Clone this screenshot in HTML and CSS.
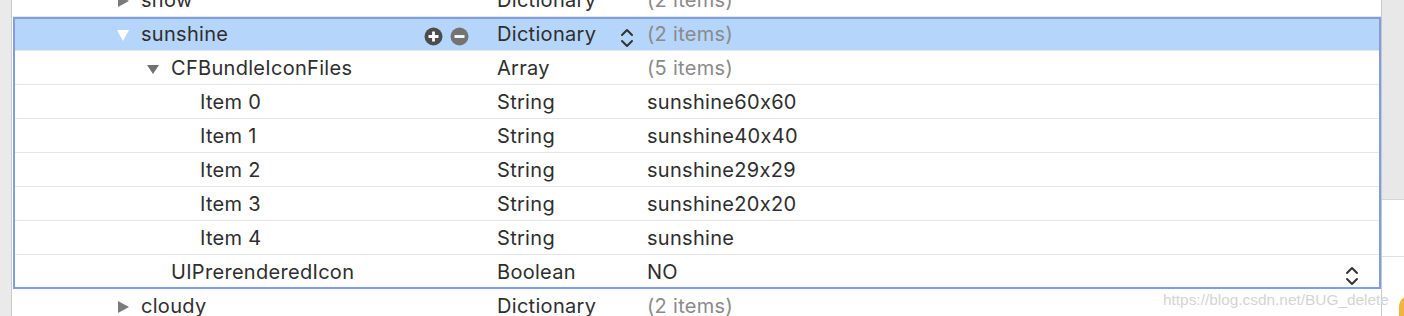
FILE: index.html
```html
<!DOCTYPE html>
<html>
<head>
<meta charset="utf-8">
<link rel="stylesheet" href="styles.css">
</head>
<body>
<div class="window">
  <div class="sidebar"></div>
  <div class="outline">
    <div class="row">
      <div class="key lvl0"><span class="disc"><svg width="13" height="12" viewBox="0 0 13 12"><path d="M1 0 L12 6 L1 12 Z" fill="#7a7a7a"/></svg></span><span class="name">snow</span></div>
      <div class="type">Dictionary</div>
      <div class="value muted">(2 items)</div>
    </div>
    <div class="group">
      <div class="row selected">
        <div class="key lvl0"><span class="disc"><svg width="13" height="12" viewBox="0 0 13 12"><path d="M0 1 L12 1 L6 12 Z" fill="#ffffff"/></svg></span><span class="name">sunshine</span>
          <span class="actions">
            <svg class="btn" width="19" height="19" viewBox="0 0 19 19"><circle cx="9.5" cy="9.5" r="9" fill="#4c4c4c"/><path d="M9.5 4.5 V14.5 M4.5 9.5 H14.5" stroke="#fff" stroke-width="2.8"/></svg>
            <svg class="btn" width="19" height="19" viewBox="0 0 19 19"><circle cx="9.5" cy="9.5" r="9" fill="#737373"/><path d="M4.5 9.5 H14.5" stroke="#fff" stroke-width="2.8"/></svg>
          </span>
        </div>
        <div class="type">Dictionary<svg class="stepper" width="14" height="24" viewBox="0 0 14 24"><path d="M2 9 L7 4 L12 9 M2 15 L7 20 L12 15" fill="none" stroke="#333" stroke-width="2" stroke-linecap="round" stroke-linejoin="round"/></svg></div>
        <div class="value muted">(2 items)</div>
      </div>
      <div class="row">
        <div class="key lvl1"><span class="disc"><svg width="13" height="12" viewBox="0 0 13 12"><path d="M0 2 L12 2 L6 11 Z" fill="#727272"/></svg></span><span class="name">CFBundleIconFiles</span></div>
        <div class="type">Array</div>
        <div class="value muted">(5 items)</div>
      </div>
      <div class="row">
        <div class="key lvl2"><span class="name">Item 0</span></div>
        <div class="type">String</div>
        <div class="value">sunshine60x60</div>
      </div>
      <div class="row">
        <div class="key lvl2"><span class="name">Item 1</span></div>
        <div class="type">String</div>
        <div class="value">sunshine40x40</div>
      </div>
      <div class="row">
        <div class="key lvl2"><span class="name">Item 2</span></div>
        <div class="type">String</div>
        <div class="value">sunshine29x29</div>
      </div>
      <div class="row">
        <div class="key lvl2"><span class="name">Item 3</span></div>
        <div class="type">String</div>
        <div class="value">sunshine20x20</div>
      </div>
      <div class="row">
        <div class="key lvl2"><span class="name">Item 4</span></div>
        <div class="type">String</div>
        <div class="value">sunshine</div>
      </div>
      <div class="row">
        <div class="key lvl1"><span class="disc"></span><span class="name">UIPrerenderedIcon</span></div>
        <div class="type">Boolean</div>
        <div class="value">NO<svg class="stepper end" width="14" height="24" viewBox="0 0 14 24"><path d="M2 9 L7 4 L12 9 M2 15 L7 20 L12 15" fill="none" stroke="#333" stroke-width="2" stroke-linecap="round" stroke-linejoin="round"/></svg></div>
      </div>
    </div>
    <div class="row">
      <div class="key lvl0"><span class="disc"><svg width="13" height="12" viewBox="0 0 13 12"><path d="M1 0 L12 6 L1 12 Z" fill="#7a7a7a"/></svg></span><span class="name">cloudy</span></div>
      <div class="type">Dictionary</div>
      <div class="value muted">(2 items)</div>
    </div>
  </div>
  <div class="gutter">
    <div class="gutter-top"></div>
    <div class="gutter-mid"></div>
  </div>
  <div class="watermark">https://blog.csdn.net/BUG_delete</div>
  <div class="blob"></div>
</div>
</body>
</html>
```
FILE: styles.css
```css
html, body {
  margin: 0;
  padding: 0;
  background: #ffffff;
}
body {
  width: 1404px;
  height: 316px;
  overflow: hidden;
  font-family: "Inter", "Liberation Sans", sans-serif;
  font-size: 20px;
  letter-spacing: 0.3px;
  font-feature-settings: "calt" 0;
  color: #2e2e2e;
}
.window {
  position: relative;
  display: flex;
  height: 316px;
  overflow: hidden;
}
.sidebar {
  width: 11px;
  flex: none;
  background: #eaeaea;
  border-right: 1px solid #cbcbcb;
}
.outline {
  width: 1368px;
  flex: none;
  padding-left: 1px;
  margin-top: -17px;
}
.group {
  outline: 2px solid #7f9de0;
  outline-offset: -2px;
}
.row {
  display: flex;
  height: 33px;
  border-bottom: 1px solid #e6e6e6;
  align-items: stretch;
}
.row.selected {
  background: #b5d5fa;
}
.key {
  width: 484px;
  flex: none;
  display: flex;
  align-items: center;
  box-sizing: border-box;
}
.lvl0 { padding-left: 104px; }
.lvl1 { padding-left: 134px; }
.lvl2 { padding-left: 187px; }
.disc {
  width: 24px;
  flex: none;
  display: flex;
  align-items: center;
  padding-top: 3px;
}
.name {
  white-space: nowrap;
}
.actions {
  margin-left: auto;
  margin-right: 28px;
  display: flex;
  gap: 7px;
  padding-top: 5px;
}
.type {
  width: 150px;
  flex: none;
  display: flex;
  align-items: center;
  justify-content: space-between;
  box-sizing: border-box;
  padding-right: 13px;
}
.value {
  flex: 1;
  display: flex;
  align-items: center;
  justify-content: space-between;
  padding-right: 22px;
}
.muted {
  color: #8a8a8a;
}
.stepper {
  margin-top: 8px;
}
.gutter {
  flex: none;
  width: 22px;
  border-left: 1px solid #c8c8c8;
  display: flex;
  flex-direction: column;
}
.gutter-top {
  flex: none;
  height: 199px;
  background: #e8e8e8;
  border-bottom: 1px solid #d6d6d6;
}
.gutter-mid {
  flex: none;
  height: 56px;
  border-bottom: 1px solid #e0e0e0;
}
.watermark {
  position: absolute;
  left: 1163px;
  top: 291px;
  font-family: "Liberation Sans", sans-serif;
  font-size: 15.4px;
  letter-spacing: 0;
  color: #d4d4d4;
  white-space: nowrap;
}
.blob {
  position: absolute;
  left: 1399px;
  top: 295px;
  width: 16px;
  height: 30px;
  border-radius: 12px 0 0 0;
  background: #f2b43c;
}
```
